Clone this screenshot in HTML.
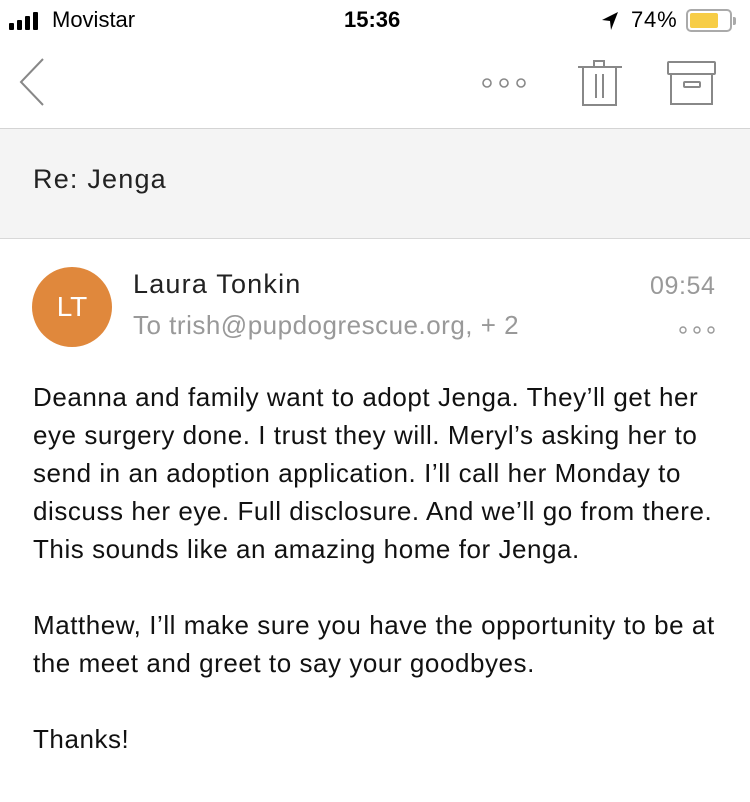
<!DOCTYPE html>
<html><head><meta charset="utf-8"><style>
*{margin:0;padding:0;box-sizing:border-box}
body{width:750px;height:802px;background:#fff;font-family:"Liberation Sans",sans-serif;position:relative;overflow:hidden;color:#1a1a1a}
.a{position:absolute;white-space:nowrap}
</style></head><body>
<div class="a" style="left:9px;top:12px;width:36px;height:18px">
<div class="a" style="left:0;top:11px;width:5px;height:7px;background:#000;border-radius:1px"></div>
<div class="a" style="left:8px;top:8px;width:5px;height:10px;background:#000;border-radius:1px"></div>
<div class="a" style="left:16px;top:4px;width:5px;height:14px;background:#000;border-radius:1px"></div>
<div class="a" style="left:24px;top:0;width:5px;height:18px;background:#000;border-radius:1px"></div>
</div>
<div class="a" style="left:52px;top:7px;font-size:22px;color:#000">Movistar</div>
<div class="a" style="left:344px;top:7px;font-size:22px;font-weight:bold;color:#000">15:36</div>
<svg class="a" style="left:600px;top:11px" width="20" height="20" viewBox="0 0 20 20"><path d="M18 1 L2 9 L10 10 L11 19 Z" fill="#000"/></svg>
<div class="a" style="left:631px;top:7px;font-size:22px;color:#000;letter-spacing:0.8px">74%</div>
<div class="a" style="left:686px;top:9px;width:46px;height:23px;border:2px solid #aaa;border-radius:5px"><div style="margin:2px;width:28px;height:15px;background:#f7cd46;border-radius:2px"></div></div>
<div class="a" style="left:733px;top:17px;width:3px;height:8px;background:#aaa;border-radius:0 2px 2px 0"></div>
<svg class="a" style="left:14px;top:57px" width="32" height="50"><path d="M29 2 L7 25 L29 48" fill="none" stroke="#888" stroke-width="2"/></svg>
<svg class="a" style="left:480px;top:76px" width="50" height="14"><g fill="none" stroke="#888" stroke-width="1.6"><circle cx="7" cy="7" r="4"/><circle cx="24" cy="7" r="4"/><circle cx="41" cy="7" r="4"/></g></svg>
<svg class="a" style="left:576px;top:58px" width="48" height="50"><g fill="none" stroke="#888" stroke-width="2"><path d="M2 9 H46"/><path d="M18 9 V3 H28 V9"/><path d="M7 9 V47 H40 V9"/><path d="M20 16 V40 M27 16 V40"/></g></svg>
<svg class="a" style="left:666px;top:60px" width="52" height="46"><g fill="none" stroke="#888" stroke-width="2"><rect x="2" y="2" width="47" height="12" rx="1"/><path d="M5 14 V44 H46 V14"/><rect x="18" y="22" width="16" height="5" rx="1"/></g></svg>
<div class="a" style="left:0;top:128px;width:750px;height:111px;background:#f4f4f4;border-top:1px solid #d4d4d4;border-bottom:1px solid #d8d8d8"></div>
<div class="a" style="left:33px;top:164px;font-size:27px;letter-spacing:1.2px;color:#222">Re: Jenga</div>
<div class="a" style="left:32px;top:267px;width:80px;height:80px;border-radius:50%;background:#e0883c;color:#fff;font-size:28px;text-align:center;line-height:80px">LT</div>
<div class="a" style="left:133px;top:269px;font-size:27px;letter-spacing:1.2px;color:#222">Laura Tonkin</div>
<div class="a" style="left:133px;top:310px;font-size:26px;letter-spacing:0.5px;color:#999">To trish@pupdogrescue.org, + 2</div>
<div class="a" style="left:650px;top:272px;font-size:25px;letter-spacing:0.6px;color:#999">09:54</div>
<svg class="a" style="left:678px;top:324px" width="40" height="12"><g fill="none" stroke="#999" stroke-width="1.4"><circle cx="5" cy="6" r="3"/><circle cx="19" cy="6" r="3"/><circle cx="33" cy="6" r="3"/></g></svg>
<div class="a" style="left:33px;top:378px;font-size:26px;letter-spacing:0.55px;line-height:38px;color:#111">Deanna and family want to adopt Jenga. They’ll get her<br>eye surgery done. I trust they will. Meryl’s asking her to<br>send in an adoption application. I’ll call her Monday to<br>discuss her eye. Full disclosure. And we’ll go from there.<br>This sounds like an amazing home for Jenga.<br><br>Matthew, I’ll make sure you have the opportunity to be at<br>the meet and greet to say your goodbyes.<br><br>Thanks!</div>
</body></html>
